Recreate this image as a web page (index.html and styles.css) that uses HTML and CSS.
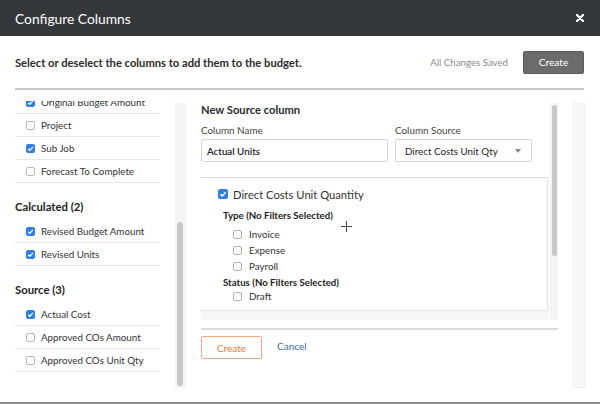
FILE: index.html
```html
<!DOCTYPE html>
<html>
<head>
<meta charset="utf-8">
<link rel="stylesheet" href="styles.css">
</head>
<body>
<div class="modal">
  <div class="header">
    <span class="title">Configure Columns</span>
    <svg class="close" width="8" height="8" viewBox="0 0 8 8"><path d="M1 1L7 7M7 1L1 7" stroke="#fff" stroke-width="2.2" stroke-linecap="round"/></svg>
  </div>
  <div class="sub">
    <span class="lead">Select or deselect the columns to add them to the budget.</span>
    <span class="saved">All Changes Saved</span>
    <button class="btn-dark">Create</button>
  </div>
  <div class="rule"></div>
  <div class="body">
    <div class="left">
      <div class="list-clip">
        <div class="list">
          <div class="row"><span class="cb on"><svg viewBox="0 0 10 10"><path d="M2.5 5.2L4.3 7L7.6 3.2" fill="none" stroke="#fff" stroke-width="1.4"/></svg></span>Original Budget Amount</div>
          <div class="row"><span class="cb"></span>Project</div>
          <div class="row"><span class="cb on"><svg viewBox="0 0 10 10"><path d="M2.5 5.2L4.3 7L7.6 3.2" fill="none" stroke="#fff" stroke-width="1.4"/></svg></span>Sub Job</div>
          <div class="row"><span class="cb"></span>Forecast To Complete</div>
          <div class="group">Calculated (2)</div>
          <div class="row"><span class="cb on"><svg viewBox="0 0 10 10"><path d="M2.5 5.2L4.3 7L7.6 3.2" fill="none" stroke="#fff" stroke-width="1.4"/></svg></span>Revised Budget Amount</div>
          <div class="row"><span class="cb on"><svg viewBox="0 0 10 10"><path d="M2.5 5.2L4.3 7L7.6 3.2" fill="none" stroke="#fff" stroke-width="1.4"/></svg></span>Revised Units</div>
          <div class="group">Source (3)</div>
          <div class="row"><span class="cb on"><svg viewBox="0 0 10 10"><path d="M2.5 5.2L4.3 7L7.6 3.2" fill="none" stroke="#fff" stroke-width="1.4"/></svg></span>Actual Cost</div>
          <div class="row"><span class="cb"></span>Approved COs Amount</div>
          <div class="row"><span class="cb"></span>Approved COs Unit Qty</div>
        </div>
      </div>
      <div class="track track-left"><div class="thumb thumb-left"></div></div>
    </div>
    <div class="mid">
      <div class="scroll">
        <div class="scroll-content">
          <div class="form">
            <div class="form-title">New Source column</div>
            <div class="fields">
              <div class="field">
                <div class="label">Column Name</div>
                <div class="input">Actual Units</div>
              </div>
              <div class="field">
                <div class="label">Column Source</div>
                <div class="select"><span>Direct Costs Unit Qty</span><span class="caret"></span></div>
              </div>
            </div>
          </div>
          <div class="well">
            <div class="box">
              <div class="main-check"><span class="cb on"><svg viewBox="0 0 10 10"><path d="M2.5 5.2L4.3 7L7.6 3.2" fill="none" stroke="#fff" stroke-width="1.4"/></svg></span>Direct Costs Unit Quantity</div>
              <div class="filter-head first">Type (No Filters Selected)</div>
              <div class="opt opt-first"><span class="cb"></span>Invoice</div>
              <div class="opt"><span class="cb"></span>Expense</div>
              <div class="opt"><span class="cb"></span>Payroll</div>
              <div class="filter-head">Status (No Filters Selected)</div>
              <div class="opt"><span class="cb"></span>Draft</div>
              <svg class="cursor" width="11" height="11" viewBox="0 0 11 11"><path d="M5.5 0V11M0 5.5H11" stroke="#444" stroke-width="1"/></svg>
            </div>
          </div>
        </div>
        <div class="track track-mid"><div class="thumb thumb-mid"></div></div>
      </div>
      <div class="footer">
        <button class="btn-outline">Create</button>
        <span class="cancel">Cancel</span>
      </div>
    </div>
    <div class="right-strip"></div>
  </div>
</div>
</body>
</html>
```
FILE: styles.css
```css
* { box-sizing: border-box; }
html, body { margin: 0; padding: 0; background: #fff; }
body { font-family: Lato, "Open Sans", sans-serif; color: #333; }
.modal { width: 600px; height: 404px; display: flex; flex-direction: column; border-bottom: 2px solid #8c8c8c; overflow: hidden; }
.header { height: 36px; flex: none; background: #35383b; display: flex; align-items: center; justify-content: space-between; padding: 0 16px 0 15px; }
.title { color: #fff; font-size: 13.8px; }
.close { display: block; }
.sub { height: 52px; flex: none; display: flex; align-items: center; padding: 0 16px 0 15px; }
.lead { font-size: 11.2px; font-weight: bold; color: #2b2b2b; flex: 1; }
.saved { font-size: 9.7px; color: #8a8a8a; margin-right: 15px; }
.btn-dark { width: 61px; height: 23px; background: #6b6b6b; border: 1px solid #5c5c5c; border-radius: 2px; color: #fff; font-family: Lato, sans-serif; font-size: 10.2px; padding: 0; }
.rule { height: 2px; flex: none; margin: 0 16px 0 15px; background: #c9c9c9; }
.body { flex: 1; display: flex; align-items: flex-start; padding-left: 15px; }

.left { display: flex; width: 171px; flex: none; }
.list-clip { width: 145px; height: 287px; margin-top: 11px; overflow: hidden; }
.list { margin-top: -10px; }
.row { height: 23px; border-bottom: 1px solid #e6e6e6; display: flex; align-items: center; padding-left: 11px; font-size: 9.8px; color: #333; }
.group { height: 37px; padding-top: 16px; line-height: 16px; font-size: 11.3px; font-weight: bold; color: #222; }
.cb { width: 9px; height: 9px; border: 1px solid #b8b8b8; border-radius: 2px; background: #fff; margin-right: 6px; flex: none; display: inline-flex; }
.cb.on { background: #2f7fe8; border-color: #2f7fe8; }
.cb svg { width: 9px; height: 9px; margin: -1px; }

.track { background: #f4f4f4; flex: none; }
.track-left { width: 11px; height: 285px; margin-top: 13px; margin-left: 15px; padding-top: 119px; padding-left: 2px; }
.thumb { background: #c8c8c8; border-radius: 3px; }
.thumb-left { width: 6px; height: 164px; }

.mid { width: 372px; flex: none; margin-top: 13px; padding-left: 15px; }
.scroll { display: flex; height: 217px; overflow: hidden; }
.scroll-content { width: 348px; flex: none; }
.form { background: #fff; }
.form-title { font-size: 11.2px; font-weight: bold; line-height: 14px; color: #2b2b2b; }
.fields { display: flex; gap: 7px; margin-top: 6px; }
.label { font-size: 9.9px; line-height: 14px; color: #444; }
.input, .select { height: 23px; margin-top: 2px; border: 1px solid #d6d6d6; border-radius: 2px; display: flex; align-items: center; font-size: 9.8px; color: #222; }
.input { width: 187px; padding-left: 5px; font-weight: 600; }
.select { width: 137px; padding: 0 10px 0 9px; justify-content: space-between; }
.caret { width: 0; height: 0; border-left: 3.5px solid transparent; border-right: 3.5px solid transparent; border-top: 4px solid #8a8a8a; }
.well { background: #f7f7f7; margin-top: 15px; padding: 0 1px 10px 0; }
.box { position: relative; height: 134px; background: #fff; border-top: 1px solid #dcdcdc; border-right: 1px solid #e4e4e4; border-bottom: 1px solid #e4e4e4; padding-top: 8px; }
.main-check { display: flex; align-items: center; height: 16px; padding-left: 17px; font-size: 11.2px; color: #333; }
.main-check .cb { width: 10px; height: 10px; margin-right: 5px; }
.main-check .cb svg { width: 10px; height: 10px; }
.filter-head { font-size: 9.7px; font-weight: bold; line-height: 12px; padding-left: 22px; margin-top: 2px; color: #222; }
.filter-head.first { margin-top: 7px; }
.opt { display: flex; align-items: center; height: 16px; padding-left: 32px; font-size: 9.8px; color: #333; }
.opt-first { margin-top: 5px; }
.opt .cb { margin-right: 7px; border-color: #b0b0b0; }
.cursor { position: absolute; left: 140px; top: 43px; }

.track-mid { width: 9px; height: 217px; margin-left: 1px; padding: 2px 0 0 2px; }
.thumb-mid { width: 5px; height: 151px; }

.footer { margin-top: 8px; border-top: 2px solid #dcdcdc; width: 357px; display: flex; align-items: center; padding-top: 6px; }
.btn-outline { width: 61px; height: 23px; background: #fff; border: 1px solid #f6a57c; border-radius: 2px; color: #f07a3f; font-family: Lato, sans-serif; font-size: 10px; padding: 0; }
.cancel { margin-left: 15px; font-size: 10px; color: #3c68b0; margin-top: -3px; }

.right-strip { width: 12px; height: 285px; margin-top: 13px; margin-left: 15px; background: #f8f8f8; border: 1px solid #efefef; flex: none; }
```
